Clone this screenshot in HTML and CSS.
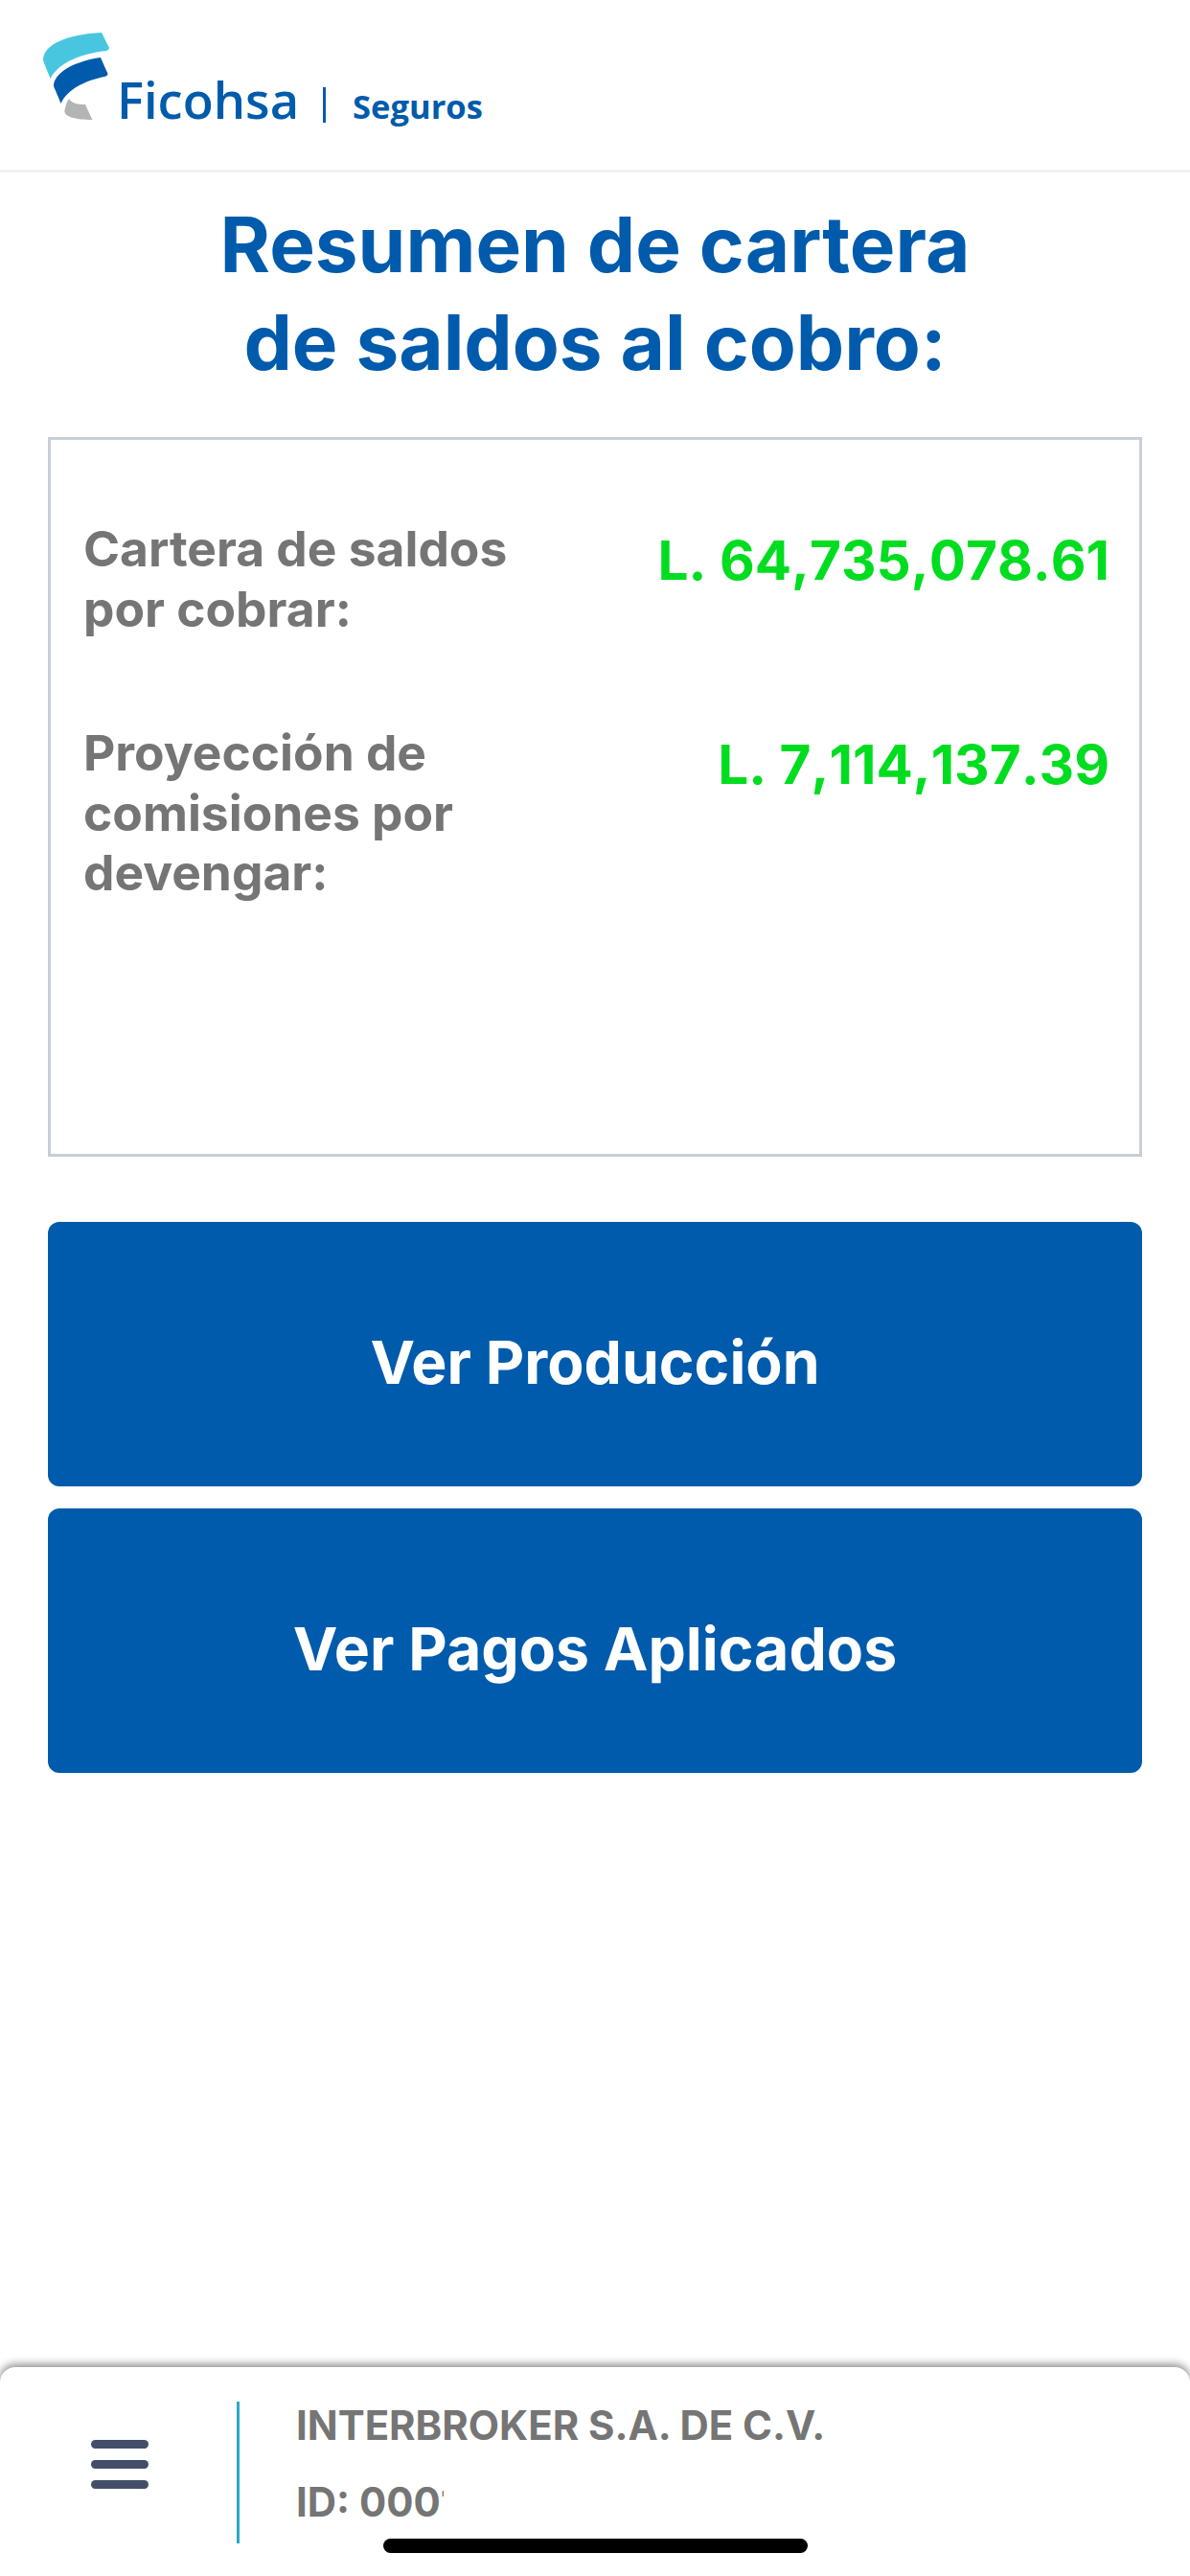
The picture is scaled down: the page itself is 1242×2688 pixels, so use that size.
FILE: index.html
```html
<!DOCTYPE html>
<html>
	<head>
		<meta charset="utf-8" />
		<title>Resumen de cartera</title>
		<link rel="stylesheet" href="styles.css">
	</head>
	<body>
		<div class="page">
			<header class="topBar">
				<svg class="logoMark" width="76" height="100" viewBox="42 30 76 100">
					<path fill="#48c6e0" d="M106 34 L114 50 Q114 52 111 53 C86 56 62 64 52.5 82 L45 63 C45 46 70 36 106 34 Z"/>
					<path fill="#005bac" d="M105 60 L112.5 77 Q112.5 79 109 80 C90 84 71 92 63.6 108 L56 90 C56 76 77 64 105 60 Z"/>
					<path fill="#b3b5b5" d="M72 103 C75 108 81 109 89 109 L96.4 125 C79 125 64 122 68 113 Q69 107 72 103 Z"/>
				</svg>
				<span class="logoName">Ficohsa</span>
				<span class="logoSep"></span>
				<span class="logoSub">Seguros</span>
			</header>

			<main class="content">
				<h1 class="title">Resumen de cartera<br>de saldos al cobro:</h1>

				<section class="summaryBox">
					<div class="summaryRow">
						<p class="rowLabel">Cartera de saldos<br>por cobrar:</p>
						<p class="rowAmount">L. 64,735,078.61</p>
					</div>
					<div class="summaryRow">
						<p class="rowLabel">Proyección de<br>comisiones por<br>devengar:</p>
						<p class="rowAmount">L. 7,114,137.39</p>
					</div>
				</section>

				<a class="bigBtn">Ver Producción</a>
				<a class="bigBtn">Ver Pagos Aplicados</a>
			</main>

			<footer class="bottomBar">
				<div class="menuIcon">
					<span></span>
					<span></span>
					<span></span>
				</div>
				<div class="brokerInfo">
					<p class="brokerName">INTERBROKER S.A. DE C.V.</p>
					<p class="brokerId">ID: 0001</p>
				</div>
				<div class="homeBar"></div>
			</footer>
		</div>
	</body>
</html>
```

FILE: styles.css
```css
html, body {
	margin: 0;
	padding: 0;
	background: #fff;
}

.page {
	width: 1242px;
	height: 2688px;
	display: flex;
	flex-direction: column;
	overflow: hidden;
	font-family: Inter, "Liberation Sans", sans-serif;
}

/* cabecera */
.topBar {
	height: 177px;
	border-bottom: 3px solid #f0f0f0;
	display: flex;
	align-items: flex-start;
	padding-left: 42px;
	color: #005bac;
}

.logoMark {
	margin-top: 30px;
}

.logoName {
	margin: 69px 0 0 4px;
	font-family: "Open Sans", sans-serif;
	font-size: 52.5px;
	font-weight: 600;
	line-height: 70px;
}

.logoSep {
	width: 3px;
	height: 37px;
	margin: 91px 0 0 25px;
	background: #005bac;
}

.logoSub {
	margin: 87px 0 0 28px;
	font-family: "Open Sans", sans-serif;
	font-size: 34.5px;
	font-weight: 700;
	line-height: 48px;
}

/* contenido */
.content {
	flex: 1;
	padding: 24px 50px 0;
	display: flex;
	flex-direction: column;
}

.title {
	margin: 0;
	color: #005bac;
	font-size: 80px;
	font-weight: 700;
	line-height: 102px;
	text-align: center;
}

.summaryBox {
	height: 751px;
	margin-top: 48px;
	padding: 82px 31px 0 34px;
	border: 3px solid #c8ced6;
	box-sizing: border-box;
}

.summaryRow {
	display: flex;
	justify-content: space-between;
	margin-bottom: 88px;
}

.rowLabel {
	margin: 0;
	color: #757575;
	font-size: 51.5px;
	font-weight: 700;
	line-height: 62.5px;
}

.rowAmount {
	margin: 8px 0 0 0;
	color: #00dd20;
	font-size: 56.7px;
	font-weight: 700;
	font-kerning: none;
	line-height: 72px;
}

.bigBtn {
	height: 276px;
	padding-top: 16px;
	margin-top: 23px;
	border-radius: 12px;
	background: #005bac;
	color: #fff;
	font-size: 62.5px;
	font-weight: 700;
	display: flex;
	align-items: center;
	justify-content: center;
	box-sizing: border-box;
}

.summaryBox + .bigBtn {
	margin-top: 68px;
}

/* barra inferior */
.bottomBar {
	position: relative;
	height: 218px;
	border-radius: 16px 16px 0 0;
	background: #fff;
	box-shadow: 0 -3px 8px rgba(0, 0, 0, 0.45);
	display: flex;
	align-items: flex-start;
}

.menuIcon {
	width: 60px;
	margin: 76px 92px 0 95px;
	display: flex;
	flex-direction: column;
	gap: 12px;
}

.menuIcon span {
	height: 9px;
	border-radius: 5px;
	background: #434f68;
}

.brokerInfo {
	height: 148px;
	margin-top: 36px;
	padding-left: 59px;
	border-left: 3px solid #2aa9c9;
	color: #757575;
	font-size: 41.9px;
	font-weight: 700;
	box-sizing: border-box;
}

.brokerName {
	margin: 0;
	line-height: 50px;
}

.brokerId {
	width: 154px;
	margin: 30px 0 0 0;
	line-height: 50px;
	white-space: nowrap;
	overflow: hidden;
}

.homeBar {
	position: absolute;
	left: 400px;
	bottom: 24px;
	width: 443px;
	height: 15px;
	border-radius: 8px;
	background: #000;
}
```
